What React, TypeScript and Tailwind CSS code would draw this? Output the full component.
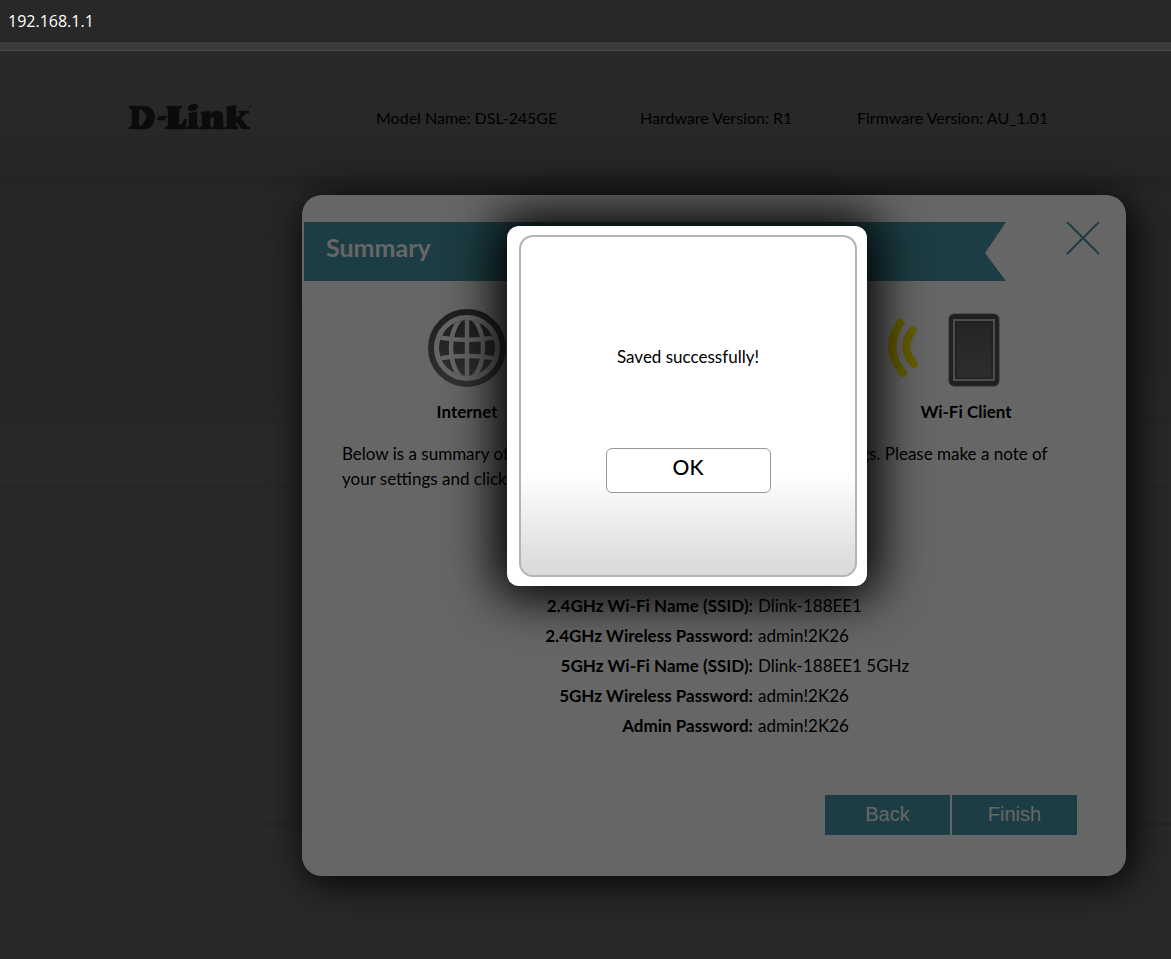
import React from "react";

const settings = [
  ["2.4GHz Wi-Fi Name (SSID):", "Dlink-188EE1"],
  ["2.4GHz Wireless Password:", "admin!2K26"],
  ["5GHz Wi-Fi Name (SSID):", "Dlink-188EE1 5GHz"],
  ["5GHz Wireless Password:", "admin!2K26"],
  ["Admin Password:", "admin!2K26"],
];

function Logo() {
  return (
    <a href="#home" aria-label="D-Link" className="flex w-[124px] items-start text-[#4a4a4a]">
      <svg width="124" height="28" viewBox="0 0 124 28" fill="currentColor" stroke="currentColor" strokeWidth=".4" strokeLinejoin="round" aria-hidden="true">
        <path fillRule="evenodd" d="M1 2h16c6 0 9 5 10 11-1 7-4 12-10 12H1v-2c2 0 3-1 3-3V7c0-2-1-3-3-3zM11 5v17c4 0 6-5 8-9-2-4-4-8-8-8z" />
        <path d="M31 12h8l-2 4h-8z" />
        <path d="M39 2h15v2c-2 0-3 1-3 3v14c3 0 4-3 5-6h3l-2 10H37v-2c2 0 3-1 3-3V7c0-2 0-3-1-3z" />
        <path d="M60 5c0-3 3-5 7-5 2 0 3 1 3 3-1 3-4 4-7 4-2 0-3-1-3-2zM60 9.500l9-2v12.500c0 2 1 3 2 3v2H58v-2c2 0 3-1 3-3v-8c0-2 0-2.500-1-2.500z" />
        <path d="M73 8l9-1v3c2-2 4-3 7-3 4 0 6 2 6 6v8c0 1 0 2 1 2v2H84v-2c2 0 2-1 2-3v-6c0-2-3-1-4 1v5c0 2 0 3 1 3v2H72v-2c2 0 2-1 2-3v-8c0-1 0-2-1-2z" />
        <path d="M98 3l10-2v13l5-4c0-1-1-1-2-1V7h10v2c-3 0-4 1-8 5l5 7c1 2 2 2 4 2v2h-8l-6-8v4c0 1 1 2 2 2v2H97v-2c2 0 2-1 2-3V6c0-2 0-2-1-2z" />
        <circle cx="122" cy="3" r="1.2" opacity=".4" />
      </svg>
    </a>
  );
}

function Globe() {
  return (
    <svg width="78" height="78" viewBox="0 0 78 78" fill="none" aria-hidden="true">
      <defs>
        <linearGradient id="globe" x1="0" y1="0" x2="0" y2="1">
          <stop offset="0" stopColor="#4c4e51" />
          <stop offset="1" stopColor="#7a7a7a" />
        </linearGradient>
        <clipPath id="disc"><circle cx="39" cy="39" r="28" /></clipPath>
      </defs>
      <circle cx="39" cy="39" r="36" stroke="url(#globe)" strokeWidth="6" />
      <circle cx="39" cy="39" r="28" fill="url(#globe)" />
      <g clipPath="url(#disc)" stroke="#fff" strokeWidth="4.5">
        <path d="M39 8v62" />
        <ellipse cx="39" cy="39" rx="16" ry="31" />
        <path d="M8 28q31 6 62 0M8 50q31-6 62 0" />
      </g>
    </svg>
  );
}

function Waves() {
  return (
    <svg width="34" height="60" viewBox="0 0 34 60" fill="none" stroke="#ffec00" strokeWidth="8" strokeLinecap="round" aria-hidden="true">
      <path d="M14 4Q-3 30 17 54" />
      <path d="M27 11Q13 28 28 45" />
    </svg>
  );
}

function Tablet() {
  return (
    <svg width="52" height="74" viewBox="0 0 52 74" aria-hidden="true">
      <defs>
        <linearGradient id="screen" x1="0" y1="0" x2="0" y2="1">
          <stop offset="0" stopColor="#5f5a58" />
          <stop offset="1" stopColor="#757172" />
        </linearGradient>
      </defs>
      <rect x="1" y="1" width="50" height="72" rx="5" fill="#54504f" stroke="#777" />
      <rect x="6" y="7" width="40" height="60" fill="url(#screen)" stroke="#c4c0bd" strokeWidth="2" />
      <rect x="8" y="9" width="36" height="56" fill="none" stroke="#4a4646" />
    </svg>
  );
}

function RouterPage() {
  return (
    <div className="flex flex-1 flex-col bg-white">
      <header className="flex h-[128px] items-center border-b-2 border-[#d4d8d7] bg-linear-to-b from-white from-40% to-[#ededed] pt-[7px] text-base">
        <div className="w-[376px] shrink-0 pl-[128px]"><Logo /></div>
        <p className="w-[264px] shrink-0">Model Name: DSL-245GE</p>
        <p className="w-[217px] shrink-0">Hardware Version: R1</p>
        <p className="whitespace-nowrap">Firmware Version: AU_1.01</p>
      </header>
      <div className="h-[245px] border-b border-[#dedede] bg-linear-to-b from-[#d6dad9] via-[#ebefee] via-5% to-[#f2f8f6]" />
      <div className="h-[63px] border-b-2 border-[#ececec]" />
      <div className="flex h-[338px] items-end pl-[150px]">
        <div className="h-[2px] flex-1 bg-linear-to-r from-white to-[#dcdcdc] to-15%" />
      </div>
    </div>
  );
}

function SummaryDialog() {
  return (
    <section role="dialog" aria-labelledby="summary" className="mr-[45px] ml-[302px] flex h-[681px] min-w-0 flex-1 flex-col rounded-[20px] bg-white pt-[27px] shadow-[5px_5px_40px_#000]">
      <div className="flex items-start justify-between pr-[26px] pl-[2px]">
        <h1 id="summary" className="h-[59px] w-[702px] bg-[#4898a8] pt-[7px] pl-[22px] text-[25px] leading-[36px] font-bold text-white [clip-path:polygon(0_0,100%_0,681px_31px,100%_100%,0_100%)]">
          Summary
        </h1>
        <button type="button" aria-label="Close" className="text-[#4898a8]">
          <svg width="34" height="33" viewBox="0 0 34 33" stroke="currentColor" strokeWidth="2" aria-hidden="true">
            <path d="M1 0l32 32M33 0L1 32" />
          </svg>
        </button>
      </div>
      <div className="flex justify-between px-[116px] pt-[28px] font-bold">
        <figure className="flex w-[98px] flex-col items-center">
          <Globe />
          <figcaption className="pt-[13px]">Internet</figcaption>
        </figure>
        <div className="flex pt-[10px]">
          <div><Waves /></div>
          <figure className="-mt-[6px] ml-[2px] flex w-[88px] flex-col items-center">
            <div className="pl-[16px]"><Tablet /></div>
            <figcaption className="pt-[13px] whitespace-nowrap">Wi-Fi Client</figcaption>
          </figure>
        </div>
      </div>
      <p className="pt-[17px] pr-[56px] pl-10 leading-[25px]">
        Below is a summary of your Wi-Fi security and device password settings. Please make a note of your settings and click &quot;Finish&quot;.
      </p>
      <dl className="grid grid-cols-[451px_1fr] gap-x-[5px] pt-[100px] leading-[30px]">
        {settings.map(([name, value]) => (
          <React.Fragment key={name}>
            <dt className="text-right font-bold">{name}</dt>
            <dd>{value}</dd>
          </React.Fragment>
        ))}
      </dl>
      <div className="mt-auto flex justify-end gap-[2px] pr-[49px] pb-[41px] font-['Liberation_Sans',sans-serif] text-xl text-white">
        <button type="button" className="h-10 w-[125px] bg-[#4898a8] pb-[2px]">Back</button>
        <button type="button" className="h-10 w-[125px] bg-[#4898a8] pb-[2px]">Finish</button>
      </div>
    </section>
  );
}

function SavedDialog() {
  return (
    <section role="alertdialog" aria-labelledby="saved" className="h-[360px] w-[360px] rounded-xl bg-white pt-[9px] pr-[10px] pb-[9px] pl-[12px] shadow-[0_0_50px_12px_#000]">
      <div className="flex h-full flex-col items-center rounded-[14px] border-2 border-[#b4b4b4] bg-linear-to-b from-white from-70% to-[#dcdcdc] to-97% pt-[108px]">
        <p id="saved">Saved successfully!</p>
        <button type="button" className="mt-[79px] h-[45px] w-[165px] rounded-md border border-[#999] bg-white pb-[8px] text-[21px] font-medium">
          OK
        </button>
      </div>
    </section>
  );
}

export default function App() {
  return (
    <div className="flex min-h-screen flex-col bg-[#282828] font-[Lato,sans-serif] text-[17px] leading-6 text-black">
      <div className="flex h-[42px] items-center px-2 font-['Open_Sans',sans-serif] text-base text-white">192.168.1.1</div>
      <div className="h-[9px] border-b border-[#484848] bg-[#3c3c3c]" />
      <main className="relative flex flex-1 flex-col overflow-hidden">
        <RouterPage />
        <div className="absolute inset-0 flex items-start bg-black/60 pt-[144px]">
          <SummaryDialog />
        </div>
        <div className="absolute inset-0 flex items-start bg-black/60 pt-[175px] pl-[507px]">
          <SavedDialog />
        </div>
      </main>
    </div>
  );
}
